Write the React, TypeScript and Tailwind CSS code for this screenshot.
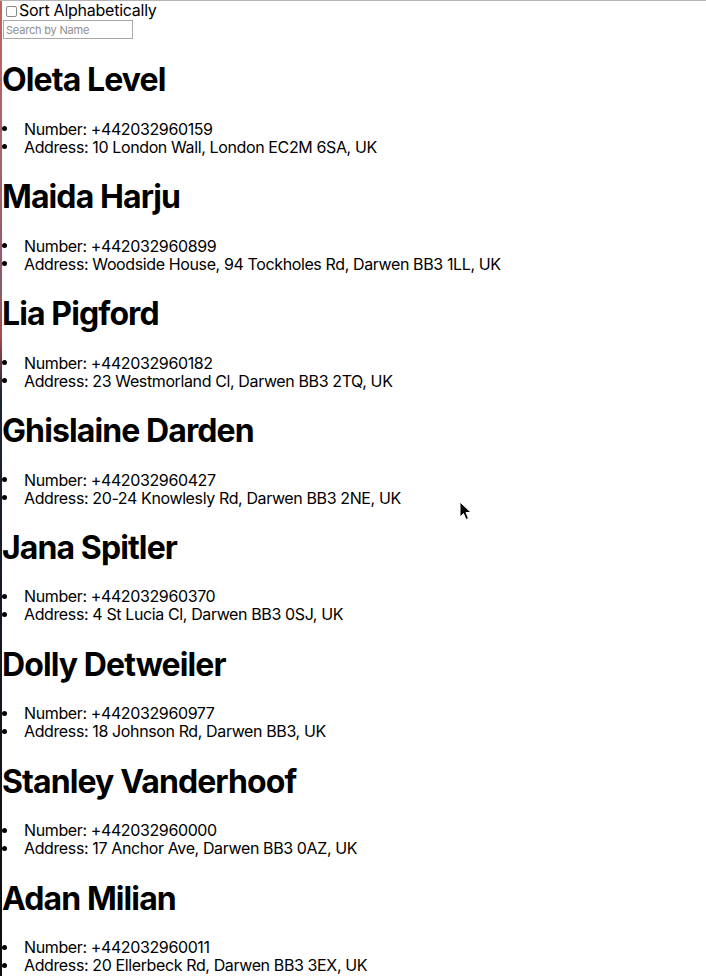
import React, { useState } from 'react'

interface Contact {
  name: string
  number: string
  address: string
}

const contacts: Contact[] = [
  { name: 'Oleta Level', number: '+442032960159', address: '10 London Wall, London EC2M 6SA, UK' },
  { name: 'Maida Harju', number: '+442032960899', address: 'Woodside House, 94 Tockholes Rd, Darwen BB3 1LL, UK' },
  { name: 'Lia Pigford', number: '+442032960182', address: '23 Westmorland Cl, Darwen BB3 2TQ, UK' },
  { name: 'Ghislaine Darden', number: '+442032960427', address: '20-24 Knowlesly Rd, Darwen BB3 2NE, UK' },
  { name: 'Jana Spitler', number: '+442032960370', address: '4 St Lucia Cl, Darwen BB3 0SJ, UK' },
  { name: 'Dolly Detweiler', number: '+442032960977', address: '18 Johnson Rd, Darwen BB3, UK' },
  { name: 'Stanley Vanderhoof', number: '+442032960000', address: '17 Anchor Ave, Darwen BB3 0AZ, UK' },
  { name: 'Adan Milian', number: '+442032960011', address: '20 Ellerbeck Rd, Darwen BB3 3EX, UK' },
]

const Bullet = () => (
  <span className="flex w-[22px] shrink-0 items-center">
    <span className="h-[5px] w-[5px] rounded-full bg-black" />
  </span>
)

const ContactCard = ({ contact }: { contact: Contact }) => {
  return (
    <div>
      <h1 className="mt-[22.44px] mb-[20.44px] text-[32px] leading-[38px] font-bold tracking-[-0.9px]">
        {contact.name}
      </h1>
      <ul className="my-[16px] text-[16px] leading-[18px] tracking-[-0.38px]">
        <li className="flex items-center">
          <Bullet />
          Number: {contact.number}
        </li>
        <li className="flex items-center">
          <Bullet />
          Address: {contact.address}
        </li>
      </ul>
    </div>
  )
}

export default function App() {
  const [sorted, setSorted] = useState(false)
  const [query, setQuery] = useState('')

  let list = contacts.filter((c) => c.name.toLowerCase().includes(query.toLowerCase()))
  if (sorted) list = [...list].sort((a, b) => a.name.localeCompare(b.name))

  return (
    <div className="relative flex min-h-[976px] border-t border-[#b4b4b4] bg-white font-['Inter',sans-serif] text-black">
      <div className="w-[2px] shrink-0 bg-[linear-gradient(to_bottom,#b9665f_0%,#a8646a_15%,#8c5a68_30%,#a34b4b_34%,#1c2437_40%,#151a25_60%,#0d0d0d_100%)]" />
      <div className="flex-1">
        <label className="flex h-[19px] items-center text-[16px] leading-[19px] tracking-[-0.25px]">
          <input
            type="checkbox"
            checked={sorted}
            onChange={(e) => setSorted(e.target.checked)}
            className="sr-only"
          />
          <span className="ml-[4px] mr-[2px] mt-[2px] h-[11px] w-[11px] rounded-[2px] border border-[#8a8a8a] bg-white" />
          Sort Alphabetically
        </label>
        <input
          type="text"
          value={query}
          onChange={(e) => setQuery(e.target.value)}
          placeholder="Search by Name"
          className="ml-[1px] block h-[19px] w-[130px] border border-[#a9a9a9] px-[2px] text-[11px] leading-[17px] tracking-[-0.2px] outline-none placeholder:text-[#8e8e8e]"
        />
        {list.map((c) => (
          <ContactCard key={c.name} contact={c} />
        ))}
      </div>
      {/* mouse pointer in the shot */}
      <svg className="absolute left-[459px] top-[500px]" width="13" height="20" viewBox="0 0 13 20">
        <path d="M1 1 L1 16 L4.5 12.5 L7 18.5 L9.5 17.5 L7 11.5 L12 11.5 Z" fill="#000" stroke="#fff" strokeWidth="1" />
      </svg>
    </div>
  )
}
